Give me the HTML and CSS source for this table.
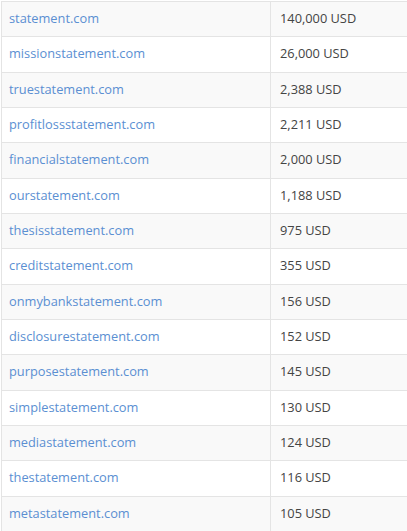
FILE: index.html
```
<!DOCTYPE html>
<html>
<head>
<meta charset="utf-8">
<link rel="stylesheet" href="styles.css">
</head>
<body>
<table class="domains">
<tbody>
<tr><td><a href="#">statement.com</a></td><td>140,000 USD</td></tr>
<tr><td><a href="#">missionstatement.com</a></td><td>26,000 USD</td></tr>
<tr><td><a href="#">truestatement.com</a></td><td>2,388 USD</td></tr>
<tr><td><a href="#">profitlossstatement.com</a></td><td>2,211 USD</td></tr>
<tr><td><a href="#">financialstatement.com</a></td><td>2,000 USD</td></tr>
<tr><td><a href="#">ourstatement.com</a></td><td>1,188 USD</td></tr>
<tr><td><a href="#">thesisstatement.com</a></td><td>975 USD</td></tr>
<tr><td><a href="#">creditstatement.com</a></td><td>355 USD</td></tr>
<tr><td><a href="#">onmybankstatement.com</a></td><td>156 USD</td></tr>
<tr><td><a href="#">disclosurestatement.com</a></td><td>152 USD</td></tr>
<tr><td><a href="#">purposestatement.com</a></td><td>145 USD</td></tr>
<tr><td><a href="#">simplestatement.com</a></td><td>130 USD</td></tr>
<tr><td><a href="#">mediastatement.com</a></td><td>124 USD</td></tr>
<tr><td><a href="#">thestatement.com</a></td><td>116 USD</td></tr>
<tr><td><a href="#">metastatement.com</a></td><td>105 USD</td></tr>
</tbody>
</table>
</body>
</html>
```
FILE: styles.css
```
html, body {
  margin: 0;
  padding: 0;
  background: #fff;
}
body {
  padding: 1px 0 0 1px;
  font-family: "Open Sans", "Liberation Sans", sans-serif;
  font-size: 12.8px;
  color: #444;
}
.domains {
  border-collapse: collapse;
  width: 420px;
  border-left: 1px solid #e4e4e4;
}
.domains td {
  border-top: 1px solid #e4e4e4;
  padding: 7px 8px 9px 9px;
  line-height: 18.33px;
  vertical-align: middle;
}
.domains td:first-child {
  width: 253px;
  padding-left: 7px;
  border-right: 1px solid #e4e4e4;
}
.domains tr:nth-child(odd) td {
  background: #f9f9f9;
}
.domains a {
  color: #5b8fd2;
  text-decoration: none;
}
```
